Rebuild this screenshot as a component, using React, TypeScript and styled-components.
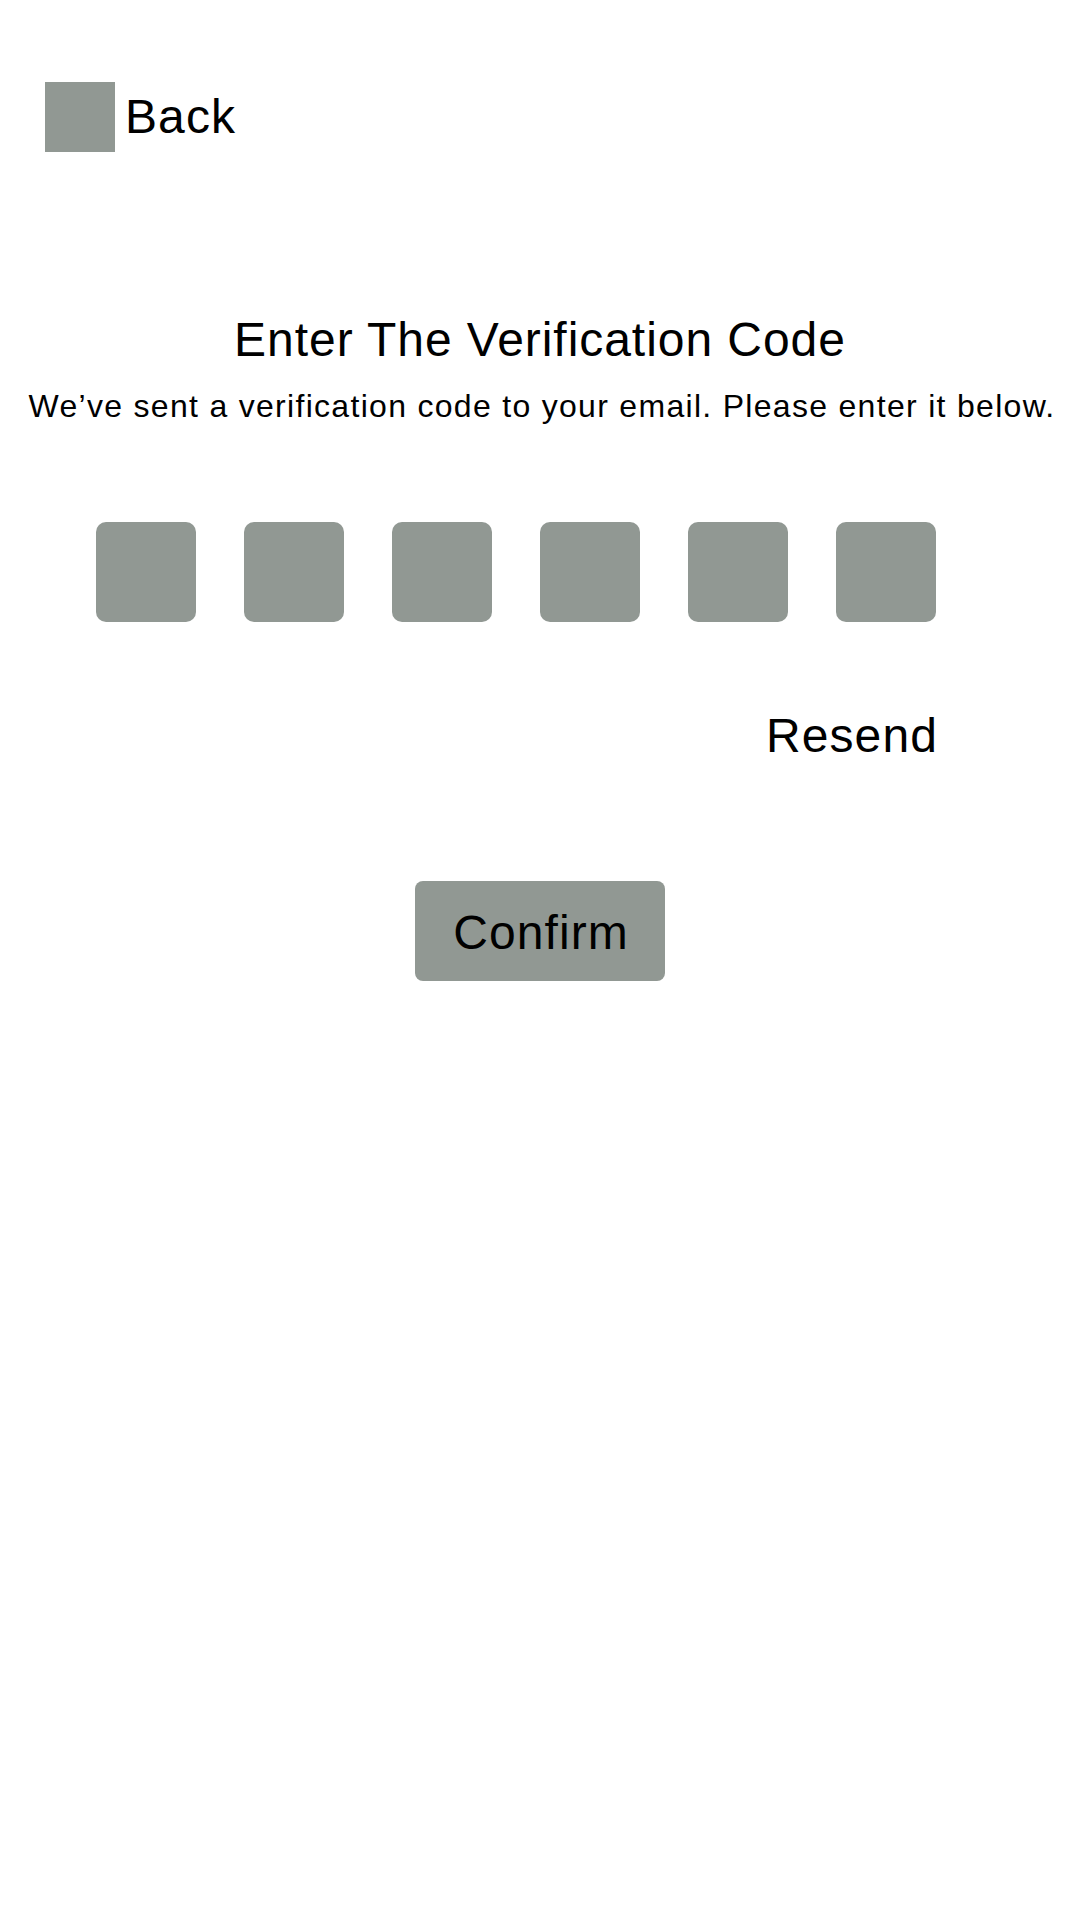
import React from 'react';
import styled, { createGlobalStyle } from 'styled-components';

const colors = {
  gray: '#919893',
  text: '#000000',
  page: '#ffffff'
};

const GlobalStyle = createGlobalStyle`
  html, body {
    margin: 0;
    padding: 0;
    background: ${colors.page};
  }
  body {
    font-family: "Liberation Sans", Arial, Helvetica, sans-serif;
    color: ${colors.text};
  }
  * {
    box-sizing: border-box;
  }
`;

const Page = styled.div`
  width: 1080px;
  min-height: 1920px;
  display: flex;
  flex-direction: column;
`;

const Header = styled.div`
  display: flex;
  align-items: center;
  gap: 10px;
  padding: 82px 0 0 45px;
`;

const BackIcon = styled.span`
  display: block;
  width: 70px;
  height: 70px;
  background: ${colors.gray};
`;

const BackLabel = styled.span`
  font-size: 48px;
  line-height: 56px;
  letter-spacing: 1.1px;
`;

const Title = styled.h1`
  margin: 160px 0 0 0;
  font-size: 48px;
  line-height: 56px;
  font-weight: 400;
  letter-spacing: 0.95px;
  text-align: center;
`;

const Subtitle = styled.p`
  margin: 18px 0 0 0;
  padding-left: 4px;
  font-size: 32px;
  line-height: 40px;
  letter-spacing: 1.3px;
  text-align: center;
  white-space: nowrap;
`;

const CodeRow = styled.div`
  display: flex;
  justify-content: space-between;
  width: 840px;
  margin: 96px 0 0 96px;
`;

const CodeBox = styled.input`
  width: 100px;
  height: 100px;
  border: none;
  border-radius: 10px;
  background: ${colors.gray};
  font-family: inherit;
  font-size: 48px;
  text-align: center;
  outline: none;
  padding: 0;
`;

const ResendRow = styled.div`
  display: flex;
  justify-content: flex-end;
  width: 842px;
  margin: 86px 0 0 96px;
`;

const ResendButton = styled.button`
  background: none;
  border: none;
  padding: 0;
  font-family: inherit;
  font-size: 48px;
  line-height: 56px;
  letter-spacing: 1.1px;
  color: ${colors.text};
  cursor: pointer;
`;

const ConfirmButton = styled.button`
  align-self: center;
  margin-top: 117px;
  width: 250px;
  height: 100px;
  border: none;
  border-radius: 8px;
  background: ${colors.gray};
  font-family: inherit;
  font-size: 48px;
  letter-spacing: 1.1px;
  color: ${colors.text};
  cursor: pointer;
  padding: 2px 0 0 2px;
`;

const App = () => {
  const slots = [0, 1, 2, 3, 4, 5];

  return (
    <>
      <GlobalStyle />
      <Page>
        <Header>
          <BackIcon />
          <BackLabel>Back</BackLabel>
        </Header>
        <Title>Enter The Verification Code</Title>
        <Subtitle>We’ve sent a verification code to your email. Please enter it below.</Subtitle>
        <CodeRow>
          {slots.map((i) => (
            <CodeBox key={i} maxLength={1} aria-label={`Digit ${i + 1}`} />
          ))}
        </CodeRow>
        <ResendRow>
          <ResendButton>Resend</ResendButton>
        </ResendRow>
        <ConfirmButton>Confirm</ConfirmButton>
      </Page>
    </>
  );
};

export default App;
